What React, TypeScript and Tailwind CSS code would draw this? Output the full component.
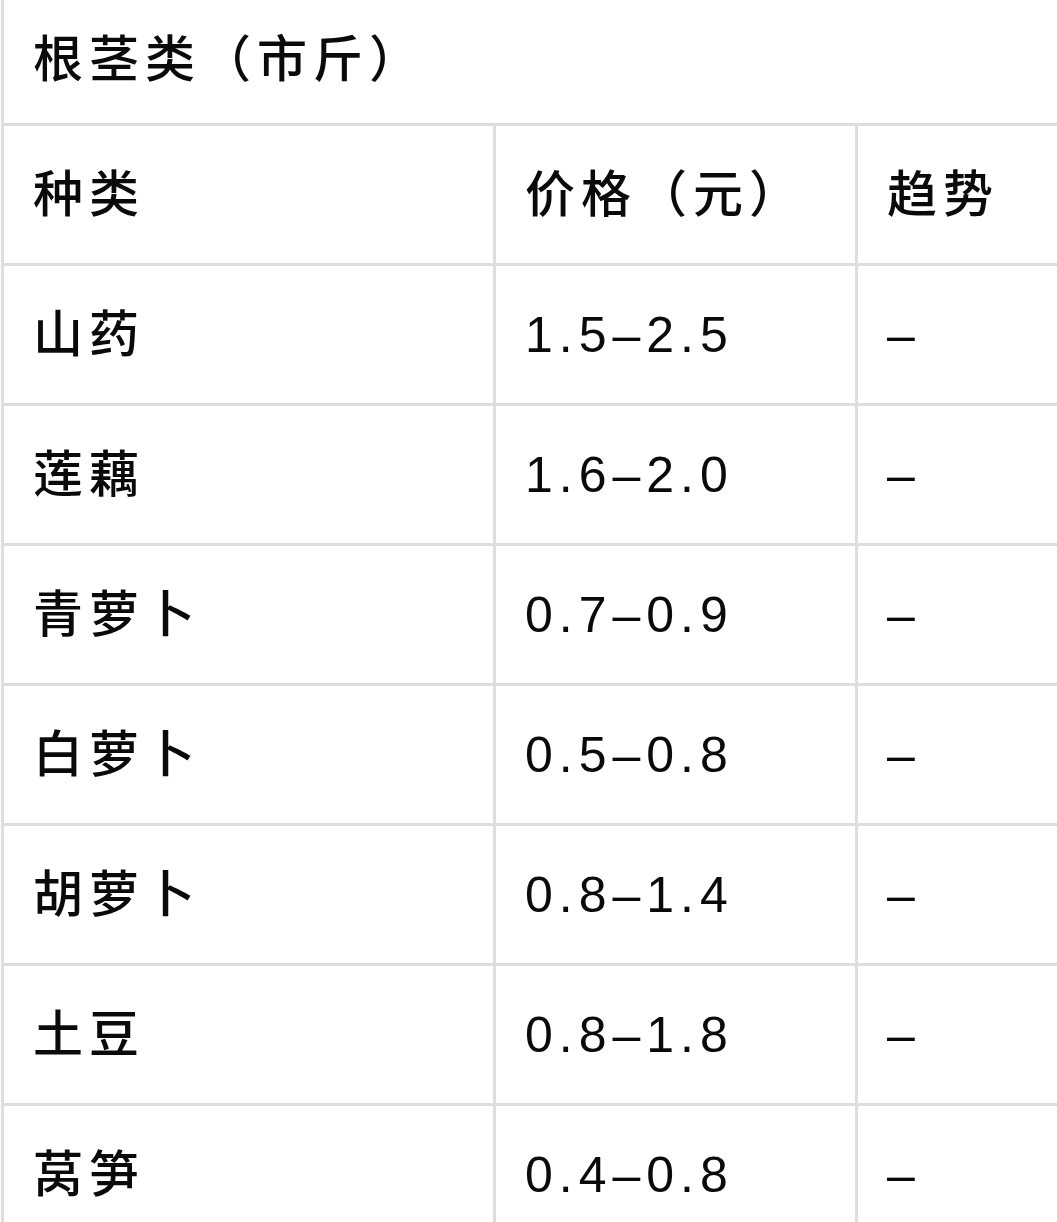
const rows = [
  { name: "山药", price: "1.5–2.5", trend: "–" },
  { name: "莲藕", price: "1.6–2.0", trend: "–" },
  { name: "青萝卜", price: "0.7–0.9", trend: "–" },
  { name: "白萝卜", price: "0.5–0.8", trend: "–" },
  { name: "胡萝卜", price: "0.8–1.4", trend: "–" },
  { name: "土豆", price: "0.8–1.8", trend: "–" },
  { name: "莴笋", price: "0.4–0.8", trend: "–" },
];

function Cell({ children, first }: { children?: React.ReactNode; first?: boolean }) {
  return (
    <div
      className={
        "flex h-[137px] items-center pl-[29px] " +
        (first ? "" : "border-l-[3px] border-[#dedede]")
      }
    >
      {children}
    </div>
  );
}

export default function App() {
  return (
    <div
      className="h-[1222px] w-[1057px] overflow-hidden bg-white text-[50px] font-medium leading-none tracking-[6px] text-[#0a0a0a]"
      style={{ fontFamily: '"Liberation Sans", "Noto Sans CJK SC", sans-serif' }}
    >
      <div className="ml-[1px] w-[1100px] border-l-[3px] border-[#dedede]">
        <div className="flex h-[123px] items-center pb-[4px] pl-[29px]">根茎类（市斤）</div>
        <div className="border-t-[3px] border-[#dedede]">
          <div className="grid grid-cols-[489px_362px_1fr]">
            <Cell first>种类</Cell>
            <Cell>价格（元）</Cell>
            <Cell>趋势</Cell>
          </div>
        </div>
        {rows.map((r) => (
          <div key={r.name} className="border-t-[3px] border-[#dedede]">
            <div className="grid grid-cols-[489px_362px_1fr]">
              <Cell first>{r.name}</Cell>
              <Cell>{r.price}</Cell>
              <Cell>{r.trend}</Cell>
            </div>
          </div>
        ))}
      </div>
    </div>
  );
}
